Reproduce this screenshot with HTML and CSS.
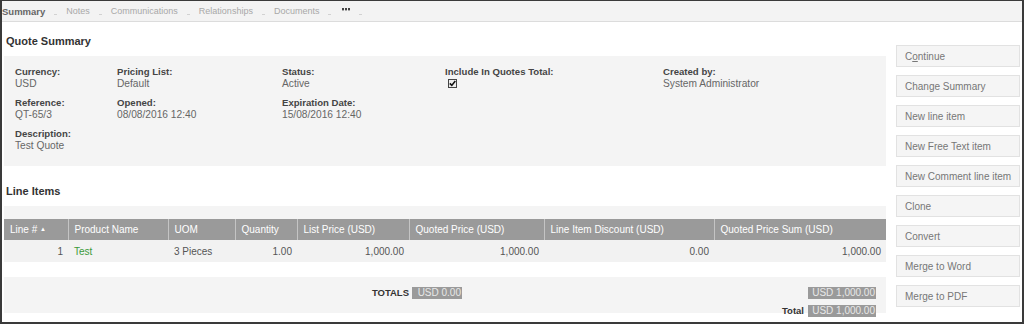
FILE: index.html
```html
<!DOCTYPE html>
<html>
<head>
<meta charset="utf-8">
<link rel="stylesheet" href="styles.css">
</head>
<body>
<div class="frame">
  <div class="tabs">
    <span class="tab active">Summary</span><span class="sep"></span>
    <span class="tab">Notes</span><span class="sep"></span>
    <span class="tab">Communications</span><span class="sep"></span>
    <span class="tab">Relationships</span><span class="sep"></span>
    <span class="tab">Documents</span><span class="sep"></span>
    <span class="tab more"><svg width="8" height="3" viewBox="0 0 8 3"><rect x="0" y="0" width="2" height="2.4" fill="#444"/><rect x="3" y="0" width="2" height="2.4" fill="#444"/><rect x="6" y="0" width="2" height="2.4" fill="#444"/></svg></span><span class="sep"></span>
  </div>
  <div class="main">
    <div class="content">
      <h2 class="heading first">Quote Summary</h2>
      <div class="panel fields">
        <div class="field"><div class="lbl">Currency:</div><div class="val">USD</div></div>
        <div class="field"><div class="lbl">Pricing List:</div><div class="val">Default</div></div>
        <div class="field"><div class="lbl">Status:</div><div class="val">Active</div></div>
        <div class="field"><div class="lbl">Include In Quotes Total:</div><div class="val"><span class="check"><svg width="7" height="7" viewBox="0 0 7 7"><path d="M0.8 3.4 L2.8 5.4 L6.3 1" fill="none" stroke="#111" stroke-width="1.6"/></svg></span></div></div>
        <div class="field"><div class="lbl">Created by:</div><div class="val">System Administrator</div></div>
        <div class="field"><div class="lbl">Reference:</div><div class="val">QT-65/3</div></div>
        <div class="field"><div class="lbl">Opened:</div><div class="val">08/08/2016 12:40</div></div>
        <div class="field"><div class="lbl">Expiration Date:</div><div class="val">15/08/2016 12:40</div></div>
        <div class="field"></div>
        <div class="field"></div>
        <div class="field"><div class="lbl">Description:</div><div class="val">Test Quote</div></div>
      </div>
      <h2 class="heading second">Line Items</h2>
      <div class="tablewrap">
        <table class="items">
          <thead>
            <tr>
              <th class="c1">Line # <span class="sort">&#9650;</span></th>
              <th class="c2">Product Name</th>
              <th class="c3">UOM</th>
              <th class="c4">Quantity</th>
              <th class="c5">List Price (USD)</th>
              <th class="c6">Quoted Price (USD)</th>
              <th class="c7">Line Item Discount (USD)</th>
              <th class="c8">Quoted Price Sum (USD)</th>
            </tr>
          </thead>
          <tbody>
            <tr>
              <td class="num">1</td>
              <td class="link">Test</td>
              <td>3 Pieces</td>
              <td class="num">1.00</td>
              <td class="num">1,000.00</td>
              <td class="num">1,000.00</td>
              <td class="num">0.00</td>
              <td class="num">1,000.00</td>
            </tr>
          </tbody>
        </table>
      </div>
      <div class="panel totals">
        <div class="tlabel">TOTALS</div>
        <div class="box">USD 0.00</div>
        <div></div>
        <div class="box">USD 1,000.00</div>
        <div></div>
        <div></div>
        <div class="tlabel small">Total</div>
        <div class="box">USD 1,000.00</div>
      </div>
    </div>
    <div class="sidebar">
      <button class="btn">C<u>o</u>ntinue</button>
      <button class="btn">Change Summary</button>
      <button class="btn">New line item</button>
      <button class="btn">New Free Text item</button>
      <button class="btn">New Comment line item</button>
      <button class="btn">Clone</button>
      <button class="btn">Convert</button>
      <button class="btn">Merge to Word</button>
      <button class="btn">Merge to PDF</button>
    </div>
  </div>
</div>
</body>
</html>
```

FILE: styles.css
```css
html, body {
  margin: 0;
  padding: 0;
  background: #fff;
}
body {
  font-family: "Liberation Sans", Arial, sans-serif;
  font-size: 10px;
  color: #555;
}
.frame {
  width: 1024px;
  height: 324px;
  box-sizing: border-box;
  border: 2px solid #3a3a3a;
  border-top-width: 1px;
  overflow: hidden;
}
.tabs {
  height: 21px;
  box-sizing: border-box;
  background: #f3f3f3;
  border-bottom: 1px solid #dcdcdc;
  display: flex;
  align-items: center;
  font-size: 9px;
  color: #a8a8a8;
}
.tab {
  white-space: nowrap;
}
.tab.active {
  color: #666;
  font-weight: bold;
  font-size: 9.5px;
}
.tab.more {
  display: flex;
  align-items: center;
  padding-left: 2px;
  margin-bottom: 3px;
}
.sep {
  width: 3px;
  height: 1px;
  background: #d2d2d2;
  margin: 6px 9px 0 9px;
}
.main {
  display: flex;
  padding: 0 2px;
  gap: 10px;
}
.content {
  width: 882px;
  flex: none;
}
.heading {
  margin: 0;
  font-size: 11px;
  line-height: 14px;
  font-weight: bold;
  color: #333;
  padding-left: 2px;
}
.heading.first {
  margin-top: 12px;
  margin-bottom: 8px;
}
.heading.second {
  margin-top: 18px;
  margin-bottom: 8px;
}
.panel {
  background: #f4f4f4;
}
.fields {
  display: grid;
  grid-template-columns: 102px 165px 163px 218px 1fr;
  row-gap: 7px;
  padding: 10px 0 14px 11px;
}
.field {
  min-height: 24px;
}
.lbl {
  font-weight: bold;
  color: #454545;
  line-height: 12px;
  font-size: 9.6px;
}
.val {
  color: #666;
  line-height: 12px;
  font-size: 10.2px;
}
.check {
  display: inline-flex;
  align-items: center;
  justify-content: center;
  width: 9px;
  height: 9px;
  box-sizing: border-box;
  border: 1px solid #444;
  background: #eee;
  margin-left: 3px;
  margin-top: 1px;
}
.tablewrap {
  background: #f4f4f4;
  padding-top: 13px;
}
.items {
  width: 100%;
  border-collapse: collapse;
  table-layout: fixed;
}
.items th,
.items td {
  box-sizing: border-box;
}
.items th {
  background: #9a9a9a;
  color: #fff;
  font-weight: normal;
  text-align: left;
  height: 21px;
  padding: 0 0 0 6px;
  border-left: 1px solid #c4c4c4;
  white-space: nowrap;
  font-size: 10px;
}
.items th:first-child {
  border-left: none;
}
.sort {
  font-size: 6px;
  vertical-align: 2px;
}
.c1 { width: 64px; }
.c2 { width: 100px; }
.c3 { width: 67px; }
.c4 { width: 62px; }
.c5 { width: 112px; }
.c6 { width: 135px; }
.c7 { width: 170px; }
.items td {
  background: #f2f2f2;
  height: 22px;
  padding: 0 0 0 6px;
  color: #555;
  font-size: 10px;
}
.items td.num {
  text-align: right;
  padding: 0 5px 0 0;
}
.items td.link {
  color: #3a9a3a;
}
.totals {
  margin-top: 15px;
  height: 36px;
  box-sizing: border-box;
  padding: 10px 10px 0 0;
  display: grid;
  grid-template-columns: 408px 50px 1fr 68px;
  grid-auto-rows: 12px;
  row-gap: 6px;
}
.tlabel {
  text-align: right;
  padding-right: 3px;
  font-weight: bold;
  color: #333;
  line-height: 12px;
  font-size: 9.5px;
}
.tlabel.small {
  padding-right: 4px;
}
.box {
  background: #9a9a9a;
  color: #e8e8e8;
  line-height: 12px;
  text-align: right;
  padding-right: 1px;
  font-size: 10px;
  white-space: nowrap;
}
.sidebar {
  width: 124px;
  flex: none;
  display: flex;
  flex-direction: column;
  gap: 8px;
  padding-top: 23px;
}
.btn {
  height: 22px;
  box-sizing: border-box;
  border: 1px solid #e2e2e2;
  background: #f5f5f5;
  text-align: left;
  padding: 0 0 0 8px;
  font-family: "Liberation Sans", Arial, sans-serif;
  font-size: 10px;
  color: #777;
  margin: 0;
}
```
